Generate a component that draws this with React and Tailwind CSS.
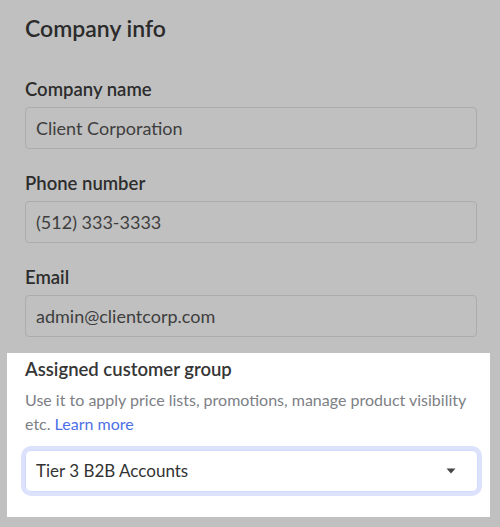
import React from "react";

const FONT = { fontFamily: "Lato, 'Open Sans', 'Liberation Sans', sans-serif" };

const TextField = ({ label, value, first = false }) => (
  <div className={first ? "mt-[35px]" : "mt-[22px]"}>
    <div className="h-[24px] text-[18.5px] leading-[24px] font-semibold text-[#2d2d2d]">{label}</div>
    <div className="mt-[6px] h-[42px] flex items-center px-[10px] border border-[#acacac] rounded-[4px] text-[18px] leading-[24px] text-[#3e3e3e]">
      {value}
    </div>
  </div>
);

const Caret = () => (
  <svg width="10" height="6" viewBox="0 0 10 6" className="text-[#454545]">
    <path d="M0.5 0.5h9L5 5.5z" fill="currentColor" />
  </svg>
);

export default function App() {
  return (
    <div className="w-[500px] h-[527px] bg-[#c0c0c0] overflow-hidden" style={FONT}>
      <div className="pl-[25px] pr-[23px] pt-[14px]">
        <h2 className="h-[28px] text-[23px] leading-[28px] font-semibold text-[#2b2b2b]">Company info</h2>
        <TextField first label="Company name" value="Client Corporation" />
        <TextField label="Phone number" value="(512) 333-3333" />
        <TextField label="Email" value="admin@clientcorp.com" />
      </div>

      {/* Highlighted field */}
      <div className="ml-[7px] mt-[16px] w-[483px] h-[164px] bg-white pl-[18px] pr-[12px] pt-[4px]">
        <div className="h-[24px] text-[18.5px] leading-[24px] font-semibold text-[#363636]">Assigned customer group</div>
        <div className="mt-[7px] text-[16px] leading-[24px] text-[#7d8085]">
          <div>Use it to apply price lists, promotions, manage product visibility</div>
          <div>
            etc. <span className="text-[#4d6fe6]">Learn more</span>
          </div>
        </div>
        <div className="mt-[14px] h-[42px] flex items-center justify-between pl-[10px] pr-[21px] border border-[#d0d8fb] rounded-[6px] shadow-[0_0_0_4px_#dce2fc] text-[17px] leading-[24px] text-[#333333]">
          <span>Tier 3 B2B Accounts</span>
          <Caret />
        </div>
      </div>
    </div>
  );
}
